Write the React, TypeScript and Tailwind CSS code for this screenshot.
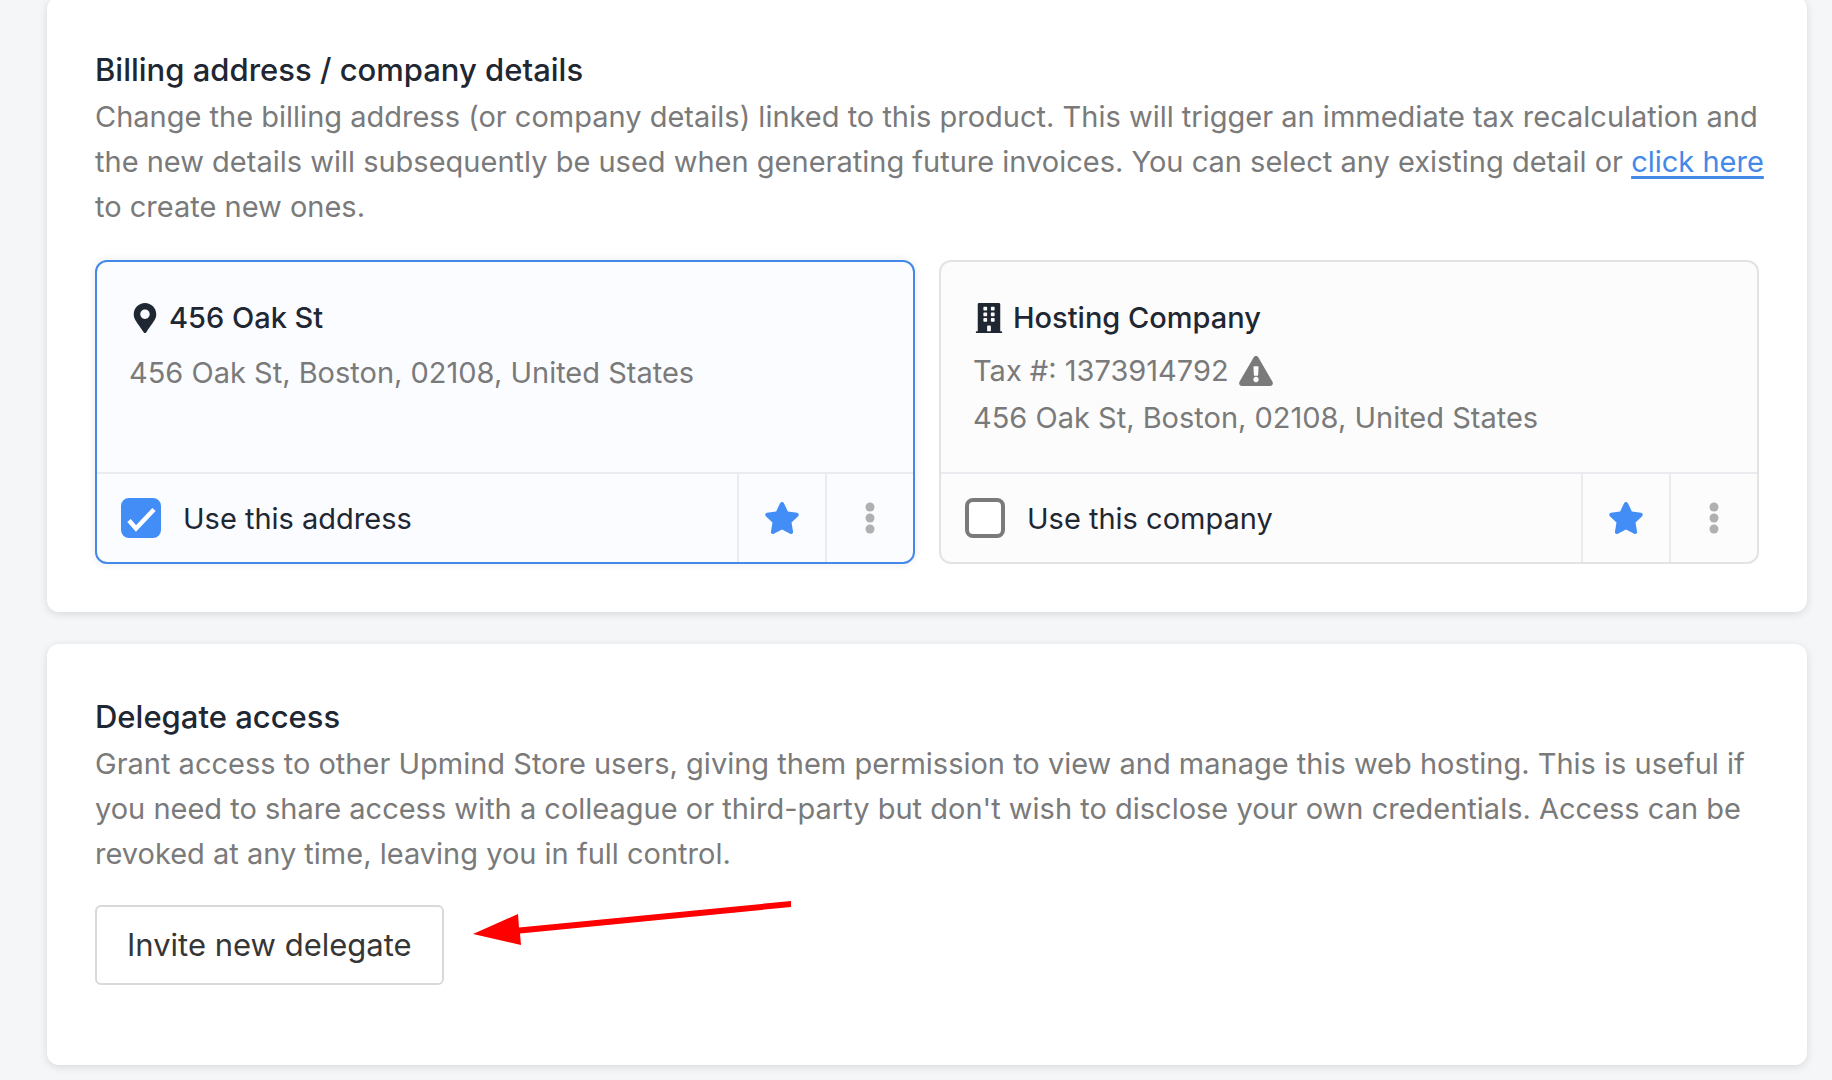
import { useState } from "react";
import type { ReactNode } from "react";
import { FaBuilding, FaExclamationTriangle, FaMapMarkerAlt, FaStar } from "react-icons/fa";
import clsx from "clsx";

function Section({ title, className, children }: { title: string; className?: string; children: ReactNode }) {
  return (
    <section className={clsx("rounded-xl bg-white px-12 pt-[49px] shadow-[0_2px_8px_rgba(0,0,0,0.12)]", className)}>
      <h2 className="text-[31px] leading-[48px] font-medium text-[#1f2733]">{title}</h2>
      {children}
    </section>
  );
}

type DetailCardProps = {
  id: string;
  title: string;
  icon: ReactNode;
  label: string;
  defaultChecked?: boolean;
  children: ReactNode;
};

function DetailCard({ id, title, icon, label, defaultChecked = false, children }: DetailCardProps) {
  const [checked, setChecked] = useState(defaultChecked);

  return (
    <div
      className={clsx(
        "flex flex-col rounded-xl border-2",
        checked ? "border-[#4489e8] bg-[#fbfcff] shadow-[0_0_10px_rgba(0,0,0,0.08)]" : "border-[#e3e3e3] bg-[#fcfcfc]"
      )}
    >
      <div className="h-[210px] px-8 pt-8 text-[29px] text-[#7a7a7a]">
        <h3 className="mb-1.5 flex items-center gap-2 leading-[48px] font-medium text-[#1f2733]">
          <span className="flex w-8 justify-center">{icon}</span>
          {title}
        </h3>
        {children}
      </div>
      <div className="flex h-[90px] border-t-2 border-[#e9ebee]">
        <div className="flex flex-1 items-center gap-[22px] pl-6">
          <span className="relative flex size-10">
            <input
              id={id}
              type="checkbox"
              checked={checked}
              onChange={(e) => setChecked(e.target.checked)}
              className="size-10 appearance-none rounded-lg border-4 border-[#7a7a7a] bg-white checked:border-[#428df6] checked:bg-[#428df6]"
            />
            {checked && (
              <svg viewBox="0 0 40 40" className="pointer-events-none absolute inset-0 size-10">
                <path d="M8 22.500 15 30.500 33 11.500" fill="none" stroke="#fff" strokeWidth="4.500" />
              </svg>
            )}
          </span>
          <label htmlFor={id} className="text-[29px] leading-[45px] text-[#1f2733]">
            {label}
          </label>
        </div>
        <button type="button" aria-label="Default" className="flex w-[88px] items-center justify-center border-l-2 border-[#e9ebee]">
          <FaStar className="h-8 w-9 text-[#428df6]" />
        </button>
        <button type="button" aria-label="More actions" className="flex w-[88px] items-center justify-center border-l-2 border-[#e9ebee]">
          <svg viewBox="0 0 10 32" className="h-8 w-[10px] fill-[#b0b0b0]">
            <circle cx="5" cy="5" r="4.5" />
            <circle cx="5" cy="16" r="4.5" />
            <circle cx="5" cy="27" r="4.5" />
          </svg>
        </button>
      </div>
    </div>
  );
}

export default function App() {
  return (
    <div className="min-h-screen bg-[#f5f6f8] font-[Inter,sans-serif]">
      <main className="-mt-[3px] flex flex-col gap-8 pr-[25px] pb-4 pl-[47px]">
        <Section title="Billing address / company details" className="pb-12">
          <p className="-mr-3 text-[29px] leading-[45px] text-[#7a7a7a]">
            Change the billing address (or company details) linked to this product. This will trigger an immediate tax
            recalculation and the new details will subsequently be used when generating future invoices. You can select
            any existing detail or{" "}
            <a href="#" className="text-[#4489e8] underline decoration-[3px] underline-offset-4">
              click here
            </a>{" "}
            to create new ones.
          </p>
          <div className="mt-[31px] grid grid-cols-2 gap-6">
            <DetailCard
              id="use-address"
              title="456 Oak St"
              icon={<FaMapMarkerAlt className="size-[30px]" />}
              label="Use this address"
              defaultChecked
            >
              <p className="leading-[50px]">456 Oak St, Boston, 02108, United States</p>
            </DetailCard>
            <DetailCard
              id="use-company"
              title="Hosting Company"
              icon={<FaBuilding className="size-[30px]" />}
              label="Use this company"
            >
              <p className="flex items-center gap-2.5 leading-[45px]">
                Tax #: 1373914792
                <FaExclamationTriangle className="h-[30px] w-[34px]" />
              </p>
              <p className="leading-[50px]">456 Oak St, Boston, 02108, United States</p>
            </DetailCard>
          </div>
        </Section>

        <Section title="Delegate access" className="pb-20">
          <p className="text-[29px] leading-[45px] text-[#7a7a7a]">
            Grant access to other Upmind Store users, giving them permission to view and manage this web hosting. This
            is useful if you need to share access with a colleague or third-party but don't wish to disclose your own
            credentials. Access can be revoked at any time, leaving you in full control.
          </p>
          <div className="relative mt-[29px] flex">
            <button
              type="button"
              className="h-20 rounded-md border-2 border-[#d9d9d9] bg-white px-[30px] text-[31px] text-[#363636]"
            >
              Invite new delegate
            </button>
            <svg viewBox="0 0 318 46" className="absolute -top-1 left-[378px] h-[46px] w-[318px] fill-[#fe0000]">
              <path d="M0 33 45 13 46 26.500 318 0V6L47 32.500 48 44Z" />
            </svg>
          </div>
        </Section>
      </main>
    </div>
  );
}
